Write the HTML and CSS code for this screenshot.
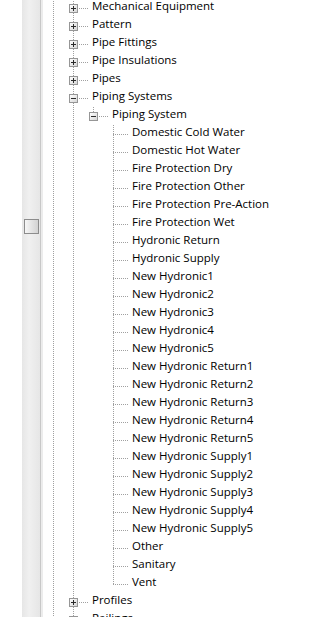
FILE: index.html
```html
<!DOCTYPE html>
<html lang="en">

<head>
    <meta charset="UTF-8">
    <meta name="viewport" content="width=device-width, initial-scale=1.0">
    <title>Project Browser</title>
    <link rel="stylesheet" href="styles.css">
</head>

<body>
    <div class="gutter"></div>
    <div class="scrollbar">
        <div class="thumb"></div>
    </div>
    <div class="divider"></div>

    <div class="tree">
        <!-- top level families -->
        <div class="row"><span class="cell v"></span><span class="cell node tee"><span class="box plus"></span></span><span class="label">Mechanical Equipment</span></div>
        <div class="row"><span class="cell v"></span><span class="cell node tee"><span class="box plus"></span></span><span class="label">Pattern</span></div>
        <div class="row"><span class="cell v"></span><span class="cell node tee"><span class="box plus"></span></span><span class="label">Pipe Fittings</span></div>
        <div class="row"><span class="cell v"></span><span class="cell node tee"><span class="box plus"></span></span><span class="label">Pipe Insulations</span></div>
        <div class="row"><span class="cell v"></span><span class="cell node tee"><span class="box plus"></span></span><span class="label">Pipes</span></div>
        <div class="row"><span class="cell v"></span><span class="cell node tee"><span class="box"></span></span><span class="label">Piping Systems</span></div>
        <div class="row"><span class="cell v"></span><span class="cell v"></span><span class="cell node"><span class="box"></span></span><span class="label">Piping System</span></div>

        <!-- piping system types -->
        <div class="row"><span class="cell v"></span><span class="cell v"></span><span class="cell"></span><span class="cell node tee"></span><span class="label">Domestic Cold Water</span></div>
        <div class="row"><span class="cell v"></span><span class="cell v"></span><span class="cell"></span><span class="cell node tee"></span><span class="label">Domestic Hot Water</span></div>
        <div class="row"><span class="cell v"></span><span class="cell v"></span><span class="cell"></span><span class="cell node tee"></span><span class="label">Fire Protection Dry</span></div>
        <div class="row"><span class="cell v"></span><span class="cell v"></span><span class="cell"></span><span class="cell node tee"></span><span class="label">Fire Protection Other</span></div>
        <div class="row"><span class="cell v"></span><span class="cell v"></span><span class="cell"></span><span class="cell node tee"></span><span class="label">Fire Protection Pre-Action</span></div>
        <div class="row"><span class="cell v"></span><span class="cell v"></span><span class="cell"></span><span class="cell node tee"></span><span class="label">Fire Protection Wet</span></div>
        <div class="row"><span class="cell v"></span><span class="cell v"></span><span class="cell"></span><span class="cell node tee"></span><span class="label">Hydronic Return</span></div>
        <div class="row"><span class="cell v"></span><span class="cell v"></span><span class="cell"></span><span class="cell node tee"></span><span class="label">Hydronic Supply</span></div>
        <div class="row"><span class="cell v"></span><span class="cell v"></span><span class="cell"></span><span class="cell node tee"></span><span class="label">New Hydronic1</span></div>
        <div class="row"><span class="cell v"></span><span class="cell v"></span><span class="cell"></span><span class="cell node tee"></span><span class="label">New Hydronic2</span></div>
        <div class="row"><span class="cell v"></span><span class="cell v"></span><span class="cell"></span><span class="cell node tee"></span><span class="label">New Hydronic3</span></div>
        <div class="row"><span class="cell v"></span><span class="cell v"></span><span class="cell"></span><span class="cell node tee"></span><span class="label">New Hydronic4</span></div>
        <div class="row"><span class="cell v"></span><span class="cell v"></span><span class="cell"></span><span class="cell node tee"></span><span class="label">New Hydronic5</span></div>
        <div class="row"><span class="cell v"></span><span class="cell v"></span><span class="cell"></span><span class="cell node tee"></span><span class="label">New Hydronic Return1</span></div>
        <div class="row"><span class="cell v"></span><span class="cell v"></span><span class="cell"></span><span class="cell node tee"></span><span class="label">New Hydronic Return2</span></div>
        <div class="row"><span class="cell v"></span><span class="cell v"></span><span class="cell"></span><span class="cell node tee"></span><span class="label">New Hydronic Return3</span></div>
        <div class="row"><span class="cell v"></span><span class="cell v"></span><span class="cell"></span><span class="cell node tee"></span><span class="label">New Hydronic Return4</span></div>
        <div class="row"><span class="cell v"></span><span class="cell v"></span><span class="cell"></span><span class="cell node tee"></span><span class="label">New Hydronic Return5</span></div>
        <div class="row"><span class="cell v"></span><span class="cell v"></span><span class="cell"></span><span class="cell node tee"></span><span class="label">New Hydronic Supply1</span></div>
        <div class="row"><span class="cell v"></span><span class="cell v"></span><span class="cell"></span><span class="cell node tee"></span><span class="label">New Hydronic Supply2</span></div>
        <div class="row"><span class="cell v"></span><span class="cell v"></span><span class="cell"></span><span class="cell node tee"></span><span class="label">New Hydronic Supply3</span></div>
        <div class="row"><span class="cell v"></span><span class="cell v"></span><span class="cell"></span><span class="cell node tee"></span><span class="label">New Hydronic Supply4</span></div>
        <div class="row"><span class="cell v"></span><span class="cell v"></span><span class="cell"></span><span class="cell node tee"></span><span class="label">New Hydronic Supply5</span></div>
        <div class="row"><span class="cell v"></span><span class="cell v"></span><span class="cell"></span><span class="cell node tee"></span><span class="label">Other</span></div>
        <div class="row"><span class="cell v"></span><span class="cell v"></span><span class="cell"></span><span class="cell node tee"></span><span class="label">Sanitary</span></div>
        <div class="row"><span class="cell v"></span><span class="cell v"></span><span class="cell"></span><span class="cell node"></span><span class="label">Vent</span></div>

        <div class="row"><span class="cell v"></span><span class="cell node tee"><span class="box plus"></span></span><span class="label">Profiles</span></div>
        <div class="row"><span class="cell v"></span><span class="cell node tee"><span class="box plus"></span></span><span class="label">Railings</span></div>
    </div>
</body>

</html>
```

FILE: styles.css
```css
body {
    margin: 0;
    height: 617px;
    overflow: hidden;
    display: flex;
    background-color: #fff;
    font-family: 'Open Sans', sans-serif;
    font-size: 11.5px;
    color: #000;
}

.gutter {
    width: 22px;
    flex: none;
}

/* vertical scrollbar of the panel */
.scrollbar {
    width: 18px;
    flex: none;
    display: flex;
    flex-direction: column;
    align-items: center;
    padding-top: 219px;
    box-sizing: border-box;
    background: linear-gradient(to right, #e6e6e6, #f0f0f0 40%, #e6e6e6);
}

.thumb {
    width: 13px;
    height: 13px;
    border: 1px solid #8c8c8c;
    background: linear-gradient(to right, #f6f6f6, #d2d2d2);
}

.divider {
    width: 2px;
    flex: none;
    border-left: 1px solid #c8c8c8;
    background-color: #ececec;
}

.tree {
    margin-top: -1px;
}

.row {
    display: flex;
    align-items: center;
    height: 18px;
    white-space: nowrap;
}

.cell {
    position: relative;
    width: 20px;
    height: 18px;
    flex: none;
}

.node {
    width: 26px;
}

/* dotted tree lines */
.v::before,
.node::before {
    content: '';
    position: absolute;
    left: 10px;
    top: 0;
    bottom: 0;
    width: 1px;
    background: repeating-linear-gradient(to bottom, #a0a0a0 0 1px, transparent 1px 2px);
}

.node::before {
    bottom: 9px;
}

.node.tee::before {
    bottom: 0;
}

.node::after {
    content: '';
    position: absolute;
    left: 10px;
    right: 0;
    top: 9px;
    height: 1px;
    background: repeating-linear-gradient(to right, #a0a0a0 0 1px, transparent 1px 2px);
}

/* expand / collapse box */
.box {
    position: absolute;
    z-index: 1;
    left: 6px;
    top: 5px;
    width: 7px;
    height: 7px;
    border: 1px solid #969696;
    background:
        linear-gradient(#2a2a2a, #2a2a2a) center / 5px 1px no-repeat,
        linear-gradient(135deg, #fff, #d6d6d6);
}

.box.plus {
    background:
        linear-gradient(#2a2a2a, #2a2a2a) center / 5px 1px no-repeat,
        linear-gradient(#2a2a2a, #2a2a2a) center / 1px 5px no-repeat,
        linear-gradient(135deg, #fff, #d6d6d6);
}

/* text sits a little above the line, as in the native control */
.label {
    margin-left: 3px;
    line-height: 18px;
    padding-bottom: 4px;
}
```
